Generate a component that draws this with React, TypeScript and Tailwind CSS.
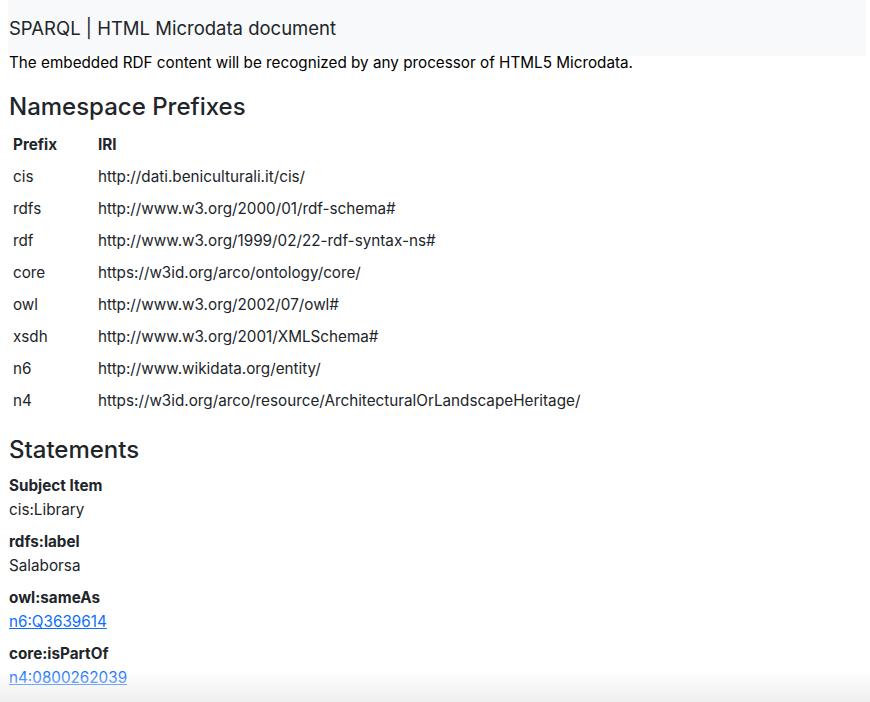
import React from "react";

const prefixes: [string, string][] = [
  ["cis", "http://dati.beniculturali.it/cis/"],
  ["rdfs", "http://www.w3.org/2000/01/rdf-schema#"],
  ["rdf", "http://www.w3.org/1999/02/22-rdf-syntax-ns#"],
  ["core", "https://w3id.org/arco/ontology/core/"],
  ["owl", "http://www.w3.org/2002/07/owl#"],
  ["xsdh", "http://www.w3.org/2001/XMLSchema#"],
  ["n6", "http://www.wikidata.org/entity/"],
  ["n4", "https://w3id.org/arco/resource/ArchitecturalOrLandscapeHeritage/"],
];

export default function App() {
  return (
    <div
      className="relative h-[702px] overflow-hidden bg-white text-[#212529]"
      style={{ fontFamily: "Inter, 'Noto Sans', sans-serif" }}
    >
      <div className="ml-2 mr-1 flex h-[56px] items-center bg-[#f8f9fa] px-px">
        <span className="text-[18.5px] leading-6">SPARQL | HTML Microdata document</span>
      </div>
      <div className="px-[9px]">
        <p className="-mt-[2px] text-[15.25px] leading-[18px] text-black">
          The embedded RDF content will be recognized by any processor of HTML5 Microdata.
        </p>
        <h4 className="mt-[20px] mb-2 text-[24px] font-medium leading-[29px]">Namespace Prefixes</h4>
        <table className="mb-[18px] text-[15.25px]">
          <thead>
            <tr>
              <th className="h-8 w-[85px] px-1 pt-px text-left font-bold">Prefix</th>
              <th className="h-8 px-1 pt-px text-left font-bold">IRI</th>
            </tr>
          </thead>
          <tbody>
            {prefixes.map(([p, iri]) => (
              <tr key={p}>
                <td className="h-8 px-1">{p}</td>
                <td className="h-8 px-1">{iri}</td>
              </tr>
            ))}
          </tbody>
        </table>
        <h4 className="mt-4 mb-[10px] text-[24px] font-medium leading-[29px]">Statements</h4>
        <div className="text-[15.25px] leading-6">
          <div className="mb-2">
            <div className="font-bold">Subject Item</div>
            <div>cis:Library</div>
          </div>
          <div className="mb-2">
            <div className="font-bold">rdfs:label</div>
            <div>Salaborsa</div>
          </div>
          <div className="mb-2">
            <div className="font-bold">owl:sameAs</div>
            <a href="#" className="text-[#0d6efd] underline">n6:Q3639614</a>
          </div>
          <div className="mb-2">
            <div className="font-bold">core:isPartOf</div>
            <a href="#" className="text-[#0d6efd] underline">n4:0800262039</a>
          </div>
        </div>
      </div>
      <div className="pointer-events-none absolute inset-x-0 bottom-0 h-[32px] bg-gradient-to-b from-white/0 to-[#efefef]" />
    </div>
  );
}
